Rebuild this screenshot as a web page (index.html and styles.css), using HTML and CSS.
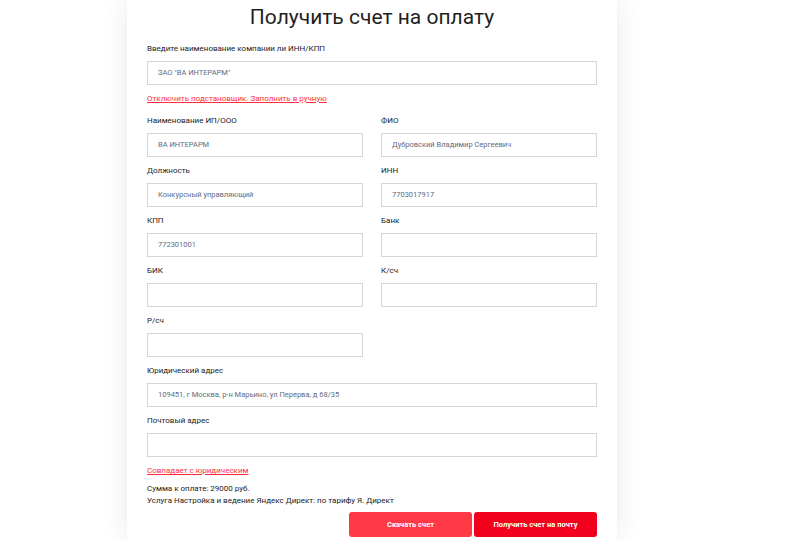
FILE: index.html
```html
<!DOCTYPE html>
<html lang="ru">
<head>
<meta charset="utf-8">
<link rel="stylesheet" href="styles.css">
</head>
<body>
<div class="page">
  <div class="card">
    <h1 class="title">Получить счет на оплату</h1>
    <div class="field">
      <div class="label">Введите наименование компании ли ИНН/КПП</div>
      <div class="input">ЗАО "ВА ИНТЕРАРМ"</div>
    </div>
    <a class="link link-top" href="#">Отключить подстановщик. Заполнить в ручную</a>
    <div class="grid">
      <div class="field">
        <div class="label">Наименование ИП/ООО</div>
        <div class="input">ВА ИНТЕРАРМ</div>
      </div>
      <div class="field">
        <div class="label">ФИО</div>
        <div class="input">Дубровский Владимир Сергеевич</div>
      </div>
      <div class="field">
        <div class="label">Должность</div>
        <div class="input">Конкурсный управляющий</div>
      </div>
      <div class="field">
        <div class="label">ИНН</div>
        <div class="input">7703017917</div>
      </div>
      <div class="field">
        <div class="label">КПП</div>
        <div class="input">772301001</div>
      </div>
      <div class="field">
        <div class="label">Банк</div>
        <div class="input"></div>
      </div>
      <div class="field">
        <div class="label">БИК</div>
        <div class="input"></div>
      </div>
      <div class="field">
        <div class="label">К/сч</div>
        <div class="input"></div>
      </div>
      <div class="field">
        <div class="label">Р/сч</div>
        <div class="input"></div>
      </div>
    </div>
    <div class="field">
      <div class="label">Юридический адрес</div>
      <div class="input">109451, г Москва, р-н Марьино, ул Перерва, д 68/35</div>
    </div>
    <div class="field">
      <div class="label">Почтовый адрес</div>
      <div class="input"></div>
    </div>
    <a class="link link-bottom" href="#">Совпадает с юридическим</a>
    <div class="summary">
      <p>Сумма к оплате: 29000 руб.</p>
      <p>Услуга Настройка и ведение Яндекс Директ: по тарифу Я. Директ</p>
    </div>
    <div class="actions">
      <button class="btn btn-light">Скачать счет</button>
      <button class="btn btn-dark">Получить счет на почту</button>
    </div>
  </div>
</div>
</body>
</html>
```
FILE: styles.css
```css
html, body {
  margin: 0;
  padding: 0;
  background: #ffffff;
}
body {
  font-family: Roboto, "Liberation Sans", Arial, sans-serif;
  color: #222;
  overflow: hidden;
}
.page {
  padding-left: 127px;
  height: 540px;
  overflow: hidden;
}
.card {
  box-sizing: border-box;
  width: 490px;
  height: 540px;
  padding: 0 20px;
  background: #fff;
  box-shadow: 0 0 26px rgba(0, 0, 0, 0.09);
}
.title {
  margin: 0;
  padding-top: 2px;
  height: 33px;
  font-size: 21px;
  line-height: 30px;
  font-weight: 400;
  text-align: center;
  color: #1f1f1f;
}
.field {
  padding-top: 8px;
}
.label {
  font-size: 8px;
  line-height: 12px;
  height: 12px;
  margin-bottom: 6px;
  color: #222;
}
.input {
  box-sizing: border-box;
  height: 24px;
  border: 1px solid #d6d6d6;
  font-size: 7.5px;
  line-height: 22px;
  padding-left: 10px;
  color: #5f6b80;
}
.link {
  display: block;
  width: max-content;
  font-size: 8px;
  line-height: 12px;
  color: #ff2d3c;
  text-decoration: underline;
}
.link-top {
  margin-top: 8px;
  margin-bottom: 2px;
}
.link-bottom {
  margin-top: 8px;
}
.summary {
  margin-top: 6px;
  font-size: 8px;
  line-height: 11.5px;
  color: #222;
}
.summary p {
  margin: 0;
}
.actions {
  display: flex;
  justify-content: flex-end;
  gap: 2px;
  margin-top: 6px;
}
.btn {
  width: 123px;
  height: 25px;
  border: 0;
  border-radius: 3px;
  color: #fff;
  font-family: Roboto, "Liberation Sans", Arial, sans-serif;
  font-size: 7.5px;
  font-weight: 700;
  padding: 0;
}
.btn-light {
  background: #ff3a46;
}
.btn-dark {
  background: #f2001c;
}
.grid {
  display: grid;
  grid-template-columns: 216px 216px;
  column-gap: 18px;
}
```
